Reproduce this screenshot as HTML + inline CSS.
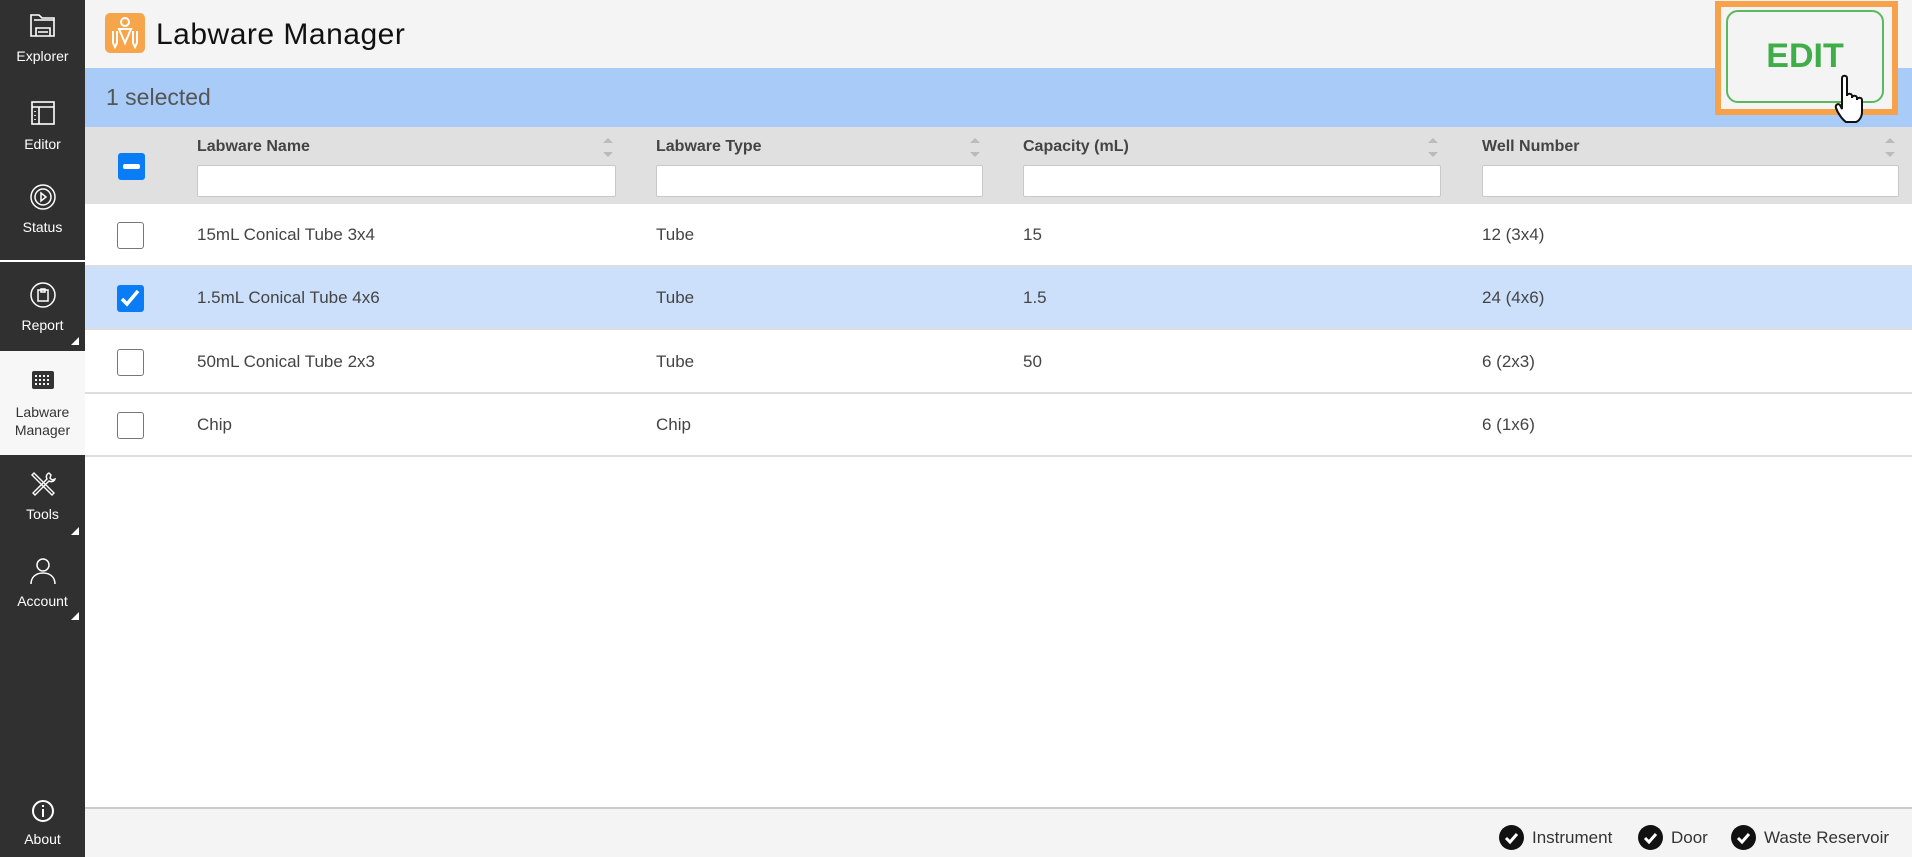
<!DOCTYPE html>
<html><head><style>
*{box-sizing:border-box;margin:0;padding:0}
body{width:1912px;height:857px;overflow:hidden;background:#fff;font-family:"Liberation Sans",Arial,sans-serif;position:relative}
.side{position:absolute;left:0;top:0;width:85px;height:857px;background:#303030;color:#fff}
.it{position:absolute;left:0;width:85px;text-align:center;font-size:14px}
.it svg{display:block;margin:0 auto}
.tri{position:absolute;right:6px;width:0;height:0;border-left:8px solid transparent;border-bottom:8px solid #fff}
.hdr{position:absolute;left:85px;top:0;right:0;height:68px;background:#f4f4f4}
.sel{position:absolute;left:85px;top:68px;right:0;height:59px;background:#a8cbf7;color:#555;font-size:23px;padding:16px 0 0 21px}
.th{position:absolute;left:85px;top:127px;right:0;height:77px;background:#e0e0e0}
.lbl{position:absolute;top:11px;font-size:16px;font-weight:bold;color:#444}
.inp{position:absolute;top:38px;height:32px;background:#fff;border:1px solid #c8c8c8;border-radius:2px}
.sort{position:absolute;top:10px;width:10px}
.row{position:absolute;left:85px;right:0;height:63px;border-bottom:2px solid #dedede;font-size:17px;color:#444}
.row span{position:absolute;top:21px}
.cb{position:absolute;left:32px;top:18px;width:27px;height:27px;border:1.5px solid #777;border-radius:3px;background:#fff}
.foot{position:absolute;left:85px;right:0;top:807px;height:50px;background:#f4f4f4;border-top:2px solid #ccc;font-size:17px;color:#333}
.st{position:absolute;top:16px;display:flex;align-items:center;gap:8px}
.ck{width:25px;height:25px;border-radius:50%;background:#111;display:inline-block}
</style></head><body>
<div class="side">
 <div class="it" style="top:12px"><svg width="30" height="26" viewBox="0 0 30 26" fill="none" stroke="#fff" stroke-width="1.6"><path d="M3 24V3h8l3 3h12v18z M6 8h20 M8 24v-8h14v8 M10 20h10"/></svg><div style="margin-top:10px">Explorer</div></div>
 <div class="it" style="top:100px"><svg width="26" height="26" viewBox="0 0 26 26" fill="none" stroke="#fff" stroke-width="1.6"><rect x="2" y="2" width="22" height="22"/><path d="M2 7h22 M9 7v17"/><path d="M5 11v1M5 15v1M5 19v1"/></svg><div style="margin-top:10px">Editor</div></div>
 <div class="it" style="top:183px"><svg width="28" height="28" viewBox="0 0 28 28" fill="none" stroke="#fff" stroke-width="1.5"><circle cx="14" cy="14" r="12"/><circle cx="14" cy="14" r="8"/><path d="M12 10l5 4-5 4z"/></svg><div style="margin-top:8px">Status</div></div>
 <div style="position:absolute;top:260px;left:0;width:85px;height:2px;background:#fff"></div>
 <div class="it" style="top:281px"><svg width="28" height="28" viewBox="0 0 28 28" fill="none" stroke="#fff" stroke-width="1.5"><circle cx="14" cy="14" r="12"/><rect x="9" y="9" width="10" height="11"/><path d="M12 8h4v3h-4z"/></svg><div style="margin-top:8px">Report</div></div>
 <div class="tri" style="top:337px"></div>
 <div style="position:absolute;top:351px;left:0;width:85px;height:104px;background:#f7f7f7;color:#333;text-align:center;font-size:14px">
  <svg style="display:block;margin:20px auto 0" width="22" height="18" viewBox="0 0 22 18"><rect x="0" y="0" width="22" height="18" rx="2" fill="#333"/><g fill="#f7f7f7"><rect x="3" y="4" width="2" height="2"/><rect x="7" y="4" width="2" height="2"/><rect x="11" y="4" width="2" height="2"/><rect x="15" y="4" width="2" height="2"/><rect x="3" y="8" width="2" height="2"/><rect x="7" y="8" width="2" height="2"/><rect x="11" y="8" width="2" height="2"/><rect x="15" y="8" width="2" height="2"/><rect x="3" y="12" width="2" height="2"/><rect x="7" y="12" width="2" height="2"/><rect x="11" y="12" width="2" height="2"/><rect x="15" y="12" width="2" height="2"/></g></svg>
  <div style="margin-top:14px;line-height:18px">Labware<br>Manager</div></div>
 <div class="it" style="top:470px"><svg width="28" height="28" viewBox="0 0 28 28" fill="none" stroke="#fff" stroke-width="1.4"><path d="M3 5l2-2 20 20-2 2z M20 3a4 4 0 0 0-2 6L4 23l2 2 14-14a4 4 0 0 0 6-2l-3 1-2-2 1-3z"/></svg><div style="margin-top:8px">Tools</div></div>
 <div class="tri" style="top:527px"></div>
 <div class="it" style="top:557px"><svg width="26" height="28" viewBox="0 0 26 28" fill="none" stroke="#fff" stroke-width="1.5"><circle cx="13" cy="8" r="6"/><path d="M1 27c0-7 5-11 12-11s12 4 12 11"/></svg><div style="margin-top:8px">Account</div></div>
 <div class="tri" style="top:612px"></div>
 <div class="it" style="top:799px"><svg width="24" height="24" viewBox="0 0 24 24" fill="none" stroke="#fff" stroke-width="2"><circle cx="12" cy="12" r="10"/><path d="M12 10v8M12 6v2"/></svg><div style="margin-top:8px">About</div></div>
</div>
<div class="hdr">
 <svg style="position:absolute;left:20px;top:13px" width="40" height="40" viewBox="0 0 40 40"><rect width="40" height="40" rx="5" fill="#f7a54a"/><g fill="none" stroke="#fff" stroke-width="2"><circle cx="20" cy="9" r="4"/><path d="M14 16h12l-6 14z M8 18v12l2 4 2-4V18 M28 18v12l2 4 2-4V18"/></g></svg>
 <div style="position:absolute;left:71px;top:18px;font-size:30px;color:#111;letter-spacing:0.5px">Labware Manager</div>
</div>
<div class="sel">1 selected</div>
<div class="th">
 <div style="position:absolute;left:33px;top:26px;width:27px;height:27px;background:#0a7cf5;border-radius:3px"><div style="position:absolute;left:5px;top:11px;width:17px;height:5px;background:#fff;border-radius:2px"></div></div>
 <div class="lbl" style="left:112px">Labware Name</div><div class="inp" style="left:112px;width:419px"></div>
 <div class="lbl" style="left:571px">Labware Type</div><div class="inp" style="left:571px;width:327px"></div>
 <div class="lbl" style="left:938px">Capacity (mL)</div><div class="inp" style="left:938px;width:418px"></div>
 <div class="lbl" style="left:1397px">Well Number</div><div class="inp" style="left:1397px;width:417px"></div>
 <svg class="sort" style="left:518px" height="22" viewBox="0 0 10 22" fill="#bbb"><path d="M0 6l5-5 5 5zM0 15l5 5 5-5z"/></svg>
 <svg class="sort" style="left:885px" height="22" viewBox="0 0 10 22" fill="#bbb"><path d="M0 6l5-5 5 5zM0 15l5 5 5-5z"/></svg>
 <svg class="sort" style="left:1343px" height="22" viewBox="0 0 10 22" fill="#bbb"><path d="M0 6l5-5 5 5zM0 15l5 5 5-5z"/></svg>
 <svg class="sort" style="left:1800px" height="22" viewBox="0 0 10 22" fill="#bbb"><path d="M0 6l5-5 5 5zM0 15l5 5 5-5z"/></svg>
</div>
<div class="row" style="top:204px"><div class="cb"></div><span style="left:112px">15mL Conical Tube 3x4</span><span style="left:571px">Tube</span><span style="left:938px">15</span><span style="left:1397px">12 (3x4)</span></div>
<div class="row" style="top:267px;background:#cce0fb"><div class="cb" style="background:#0a7cf5;border-color:#0a7cf5"><svg width="24" height="24" viewBox="0 0 24 24" fill="none" stroke="#fff" stroke-width="3.5"><path d="M4 13l5 5 11-13"/></svg></div><span style="left:112px">1.5mL Conical Tube 4x6</span><span style="left:571px">Tube</span><span style="left:938px">1.5</span><span style="left:1397px">24 (4x6)</span></div>
<div class="row" style="top:331px"><div class="cb"></div><span style="left:112px">50mL Conical Tube 2x3</span><span style="left:571px">Tube</span><span style="left:938px">50</span><span style="left:1397px">6 (2x3)</span></div>
<div class="row" style="top:394px"><div class="cb"></div><span style="left:112px">Chip</span><span style="left:571px">Chip</span><span style="left:1397px">6 (1x6)</span></div>
<div style="position:absolute;left:1715px;top:1px;width:183px;height:114px;border:6px solid #f7a24a;background:#f4f4f4">
 <div style="position:absolute;left:5px;top:3px;width:158px;height:93px;border:2px solid #5cb85c;border-radius:12px;color:#3fae49;font-size:34px;font-weight:bold;text-align:center;line-height:89px">EDIT</div>
</div>
<svg style="position:absolute;left:1832px;top:74px" width="40" height="54" viewBox="0 0 40 54"><path d="M10 4c0-3 5-3 5 0v18c0-3 5-3 5 0v2c0-3 5-3 5 0v2c0-3 5-3 5 0v12c0 5-3 9-6 10H14c-3-2-8-8-10-14-1-3 2-5 4-3l2 4z" fill="#fff" stroke="#111" stroke-width="2"/></svg>
<div class="foot">
 <div class="st" style="left:1414px"><span class="ck"><svg width="25" height="25" viewBox="0 0 25 25" fill="none" stroke="#fff" stroke-width="3"><path d="M7 13l4 4 7-8"/></svg></span>Instrument</div>
 <div class="st" style="left:1553px"><span class="ck"><svg width="25" height="25" viewBox="0 0 25 25" fill="none" stroke="#fff" stroke-width="3"><path d="M7 13l4 4 7-8"/></svg></span>Door</div>
 <div class="st" style="left:1646px"><span class="ck"><svg width="25" height="25" viewBox="0 0 25 25" fill="none" stroke="#fff" stroke-width="3"><path d="M7 13l4 4 7-8"/></svg></span>Waste Reservoir</div>
</div>
</body></html>
